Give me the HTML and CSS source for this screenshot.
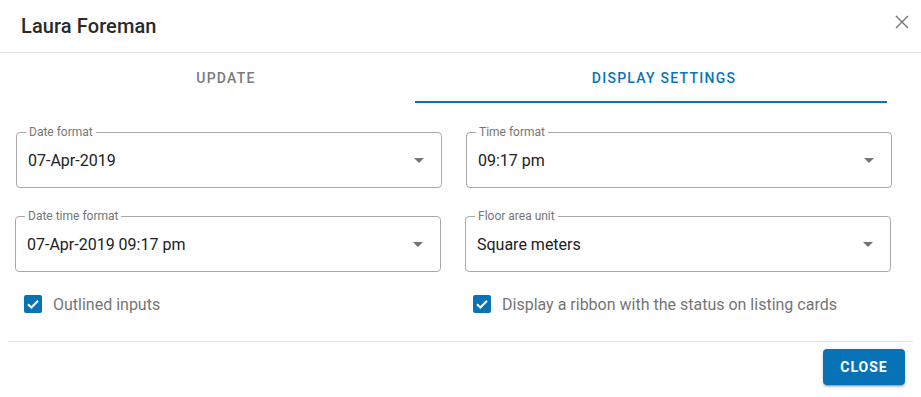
FILE: index.html
```html
<!DOCTYPE html>
<html lang="en">
<head>
    <meta charset="UTF-8">
    <meta name="viewport" content="width=device-width, initial-scale=1.0">
    <title>Laura Foreman</title>
    <link rel="stylesheet" href="styles.css">
</head>
<body>
    <div class="dialog">
        <div class="header">
            <h2 class="title">Laura Foreman</h2>
            <button class="close-x" aria-label="Close">
                <svg width="14" height="14" viewBox="0 0 14 14">
                    <path d="M1 1L13 13M13 1L1 13" stroke="#757575" stroke-width="1.4" fill="none"/>
                </svg>
            </button>
        </div>

        <div class="tabs">
            <button class="tab">Update</button>
            <button class="tab active">Display settings</button>
            <span class="indicator"></span>
        </div>

        <div class="content">
            <div class="fields">
                <div class="field">
                    <span class="label">Date format</span>
                    <span class="value">07-Apr-2019</span>
                    <span class="arrow"></span>
                </div>
                <div class="field">
                    <span class="label">Time format</span>
                    <span class="value">09:17 pm</span>
                    <span class="arrow"></span>
                </div>
                <div class="field shift">
                    <span class="label">Date time format</span>
                    <span class="value">07-Apr-2019 09:17 pm</span>
                    <span class="arrow"></span>
                </div>
                <div class="field shift">
                    <span class="label">Floor area unit</span>
                    <span class="value">Square meters</span>
                    <span class="arrow"></span>
                </div>
            </div>

            <div class="options">
                <label class="check">
                    <span class="box">
                        <svg width="18" height="18" viewBox="0 0 18 18">
                            <path d="M4 9.2L7.4 12.5L14 5.8" stroke="#fff" stroke-width="2" fill="none"/>
                        </svg>
                    </span>
                    Outlined inputs
                </label>
                <label class="check right">
                    <span class="box">
                        <svg width="18" height="18" viewBox="0 0 18 18">
                            <path d="M4 9.2L7.4 12.5L14 5.8" stroke="#fff" stroke-width="2" fill="none"/>
                        </svg>
                    </span>
                    Display a ribbon with the status on listing cards
                </label>
            </div>
        </div>

        <div class="footer">
            <button class="btn-close">Close</button>
        </div>
    </div>
</body>
</html>
```

FILE: styles.css
```css
body {
    margin: 0;
    background: #fff;
    font-family: Roboto, "Liberation Sans", Arial, sans-serif;
}

.dialog {
    width: 921px;
    height: 397px;
    background: #fff;
}

.header {
    height: 53px;
    box-sizing: border-box;
    display: flex;
    align-items: center;
    justify-content: space-between;
    padding: 0 12px 0 21px;
    border-bottom: 1px solid #e0e0e0;
}

.title {
    margin: 0;
    font-size: 20px;
    font-weight: 500;
    color: #2a2a2a;
    letter-spacing: 0.1px;
}

.close-x {
    align-self: flex-start;
    margin-top: 15px;
    padding: 0;
    border: none;
    background: none;
    width: 14px;
    height: 14px;
    cursor: pointer;
}

.close-x svg {
    display: block;
}

.tabs {
    position: relative;
    display: grid;
    grid-template-columns: 438px 438px;
    height: 50px;
    padding-left: 7px;
}

.tab {
    border: none;
    background: none;
    font-family: inherit;
    font-size: 14px;
    font-weight: 500;
    letter-spacing: 1.25px;
    text-transform: uppercase;
    color: #7a7a7a;
    cursor: pointer;
}

.tab.active {
    color: #0a74b9;
}

.indicator {
    position: absolute;
    left: 415px;
    bottom: 0;
    width: 472px;
    height: 2px;
    background: #0872b7;
}

.content {
    padding: 29px 29px 0 16px;
}

.fields {
    display: grid;
    grid-template-columns: 426px 426px;
    column-gap: 24px;
    row-gap: 28px;
}

.field {
    position: relative;
    height: 56px;
    box-sizing: border-box;
    border: 1px solid #a8a8a8;
    border-radius: 4px;
    display: flex;
    align-items: center;
    padding: 0 17px 0 11px;
}

.field.shift {
    margin-left: -1px;
    margin-right: 1px;
}

.label {
    position: absolute;
    top: -8px;
    left: 9px;
    padding: 0 3px;
    background: #fff;
    font-size: 12px;
    line-height: 14px;
    color: #757575;
}

.value {
    flex: 1;
    font-size: 16px;
    color: #212121;
}

.arrow {
    width: 0;
    height: 0;
    border-left: 5px solid transparent;
    border-right: 5px solid transparent;
    border-top: 5px solid #757575;
}

.options {
    display: grid;
    grid-template-columns: 426px 426px;
    column-gap: 24px;
    margin-top: 23px;
}

.check {
    display: flex;
    align-items: center;
    gap: 11px;
    height: 18px;
    padding-left: 8px;
    font-size: 16px;
    color: #757575;
}

.check.right {
    padding-left: 7px;
}

.box {
    width: 18px;
    height: 18px;
    border-radius: 2px;
    background: #0872b7;
}

.box svg {
    display: block;
}

.footer {
    margin: 28px 8px 0 8px;
    border-top: 1px solid #e0e0e0;
    display: flex;
    justify-content: flex-end;
    padding: 7px 8px 0 0;
}

.btn-close {
    width: 82px;
    height: 36px;
    border: none;
    border-radius: 4px;
    background: #0872b7;
    color: #fff;
    font-family: inherit;
    font-size: 14px;
    font-weight: 700;
    letter-spacing: 1px;
    text-transform: uppercase;
    box-shadow: 0 3px 1px -2px rgba(0, 0, 0, 0.2), 0 2px 2px 0 rgba(0, 0, 0, 0.14), 0 1px 5px 0 rgba(0, 0, 0, 0.12);
    cursor: pointer;
}
```
